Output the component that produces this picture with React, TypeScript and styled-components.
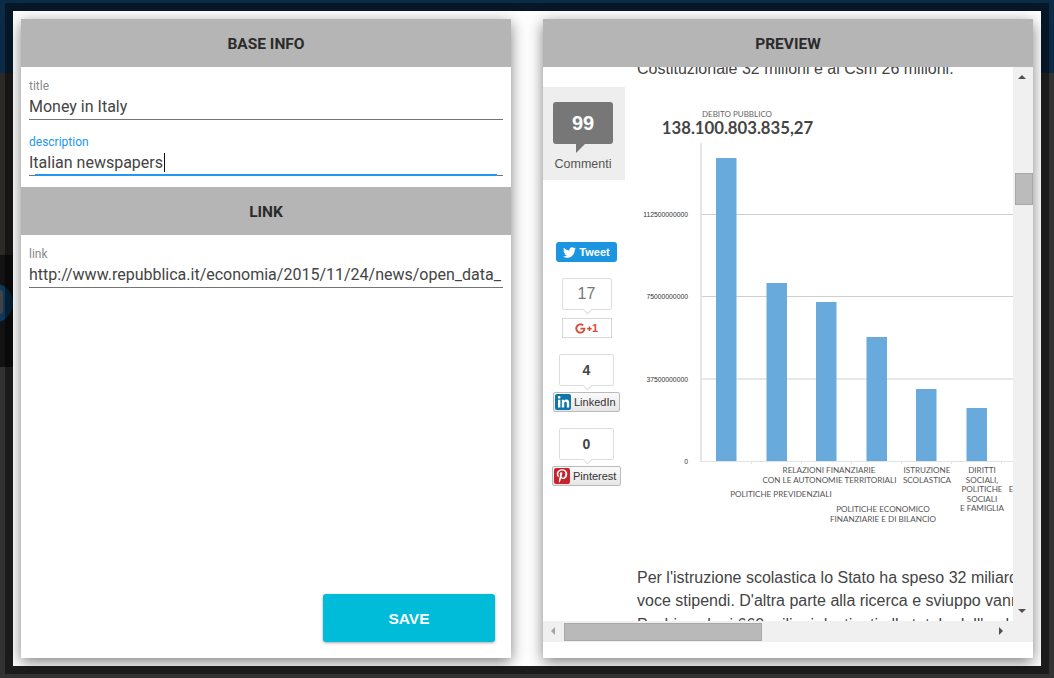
import React from 'react';
import styled, { createGlobalStyle } from 'styled-components';
import { FaTwitter, FaPinterestP, FaLinkedinIn, FaGooglePlusG } from 'react-icons/fa';

const GlobalStyle = createGlobalStyle`
  html, body {
    margin: 0;
    padding: 0;
    height: 100%;
    overflow: hidden;
    background: #333;
    font-family: Roboto, "Liberation Sans", sans-serif;
  }
`;

const App: React.FC = () => (
  <Page>
    <GlobalStyle />
    <Navbar />
    <MapBand />
    <DarkBand>
      <BlueBadge />
    </DarkBand>
    <FooterBand />

    <Frame>
      <Modal>
        <Panel>
          <PanelHeader>BASE INFO</PanelHeader>
          <FieldGroup>
            <Field>
              <FieldLabel>title</FieldLabel>
              <FieldValue>Money in Italy</FieldValue>
            </Field>
            <Field>
              <FieldLabel $focused>description</FieldLabel>
              <FieldValue $focused>
                Italian newspapers
                <Caret />
              </FieldValue>
            </Field>
          </FieldGroup>
          <PanelHeader>LINK</PanelHeader>
          <FieldGroup>
            <Field>
              <FieldLabel>link</FieldLabel>
              <FieldValue>http://www.repubblica.it/economia/2015/11/24/news/open_data_</FieldValue>
            </Field>
          </FieldGroup>
          <SaveButton>SAVE</SaveButton>
        </Panel>

        <Panel>
          <PanelHeader>PREVIEW</PanelHeader>
          <PreviewGrid>
            <Viewport>
              <ShareBar>
                <CommentBox>
                  <CommentBubble>99</CommentBubble>
                  <CommentLabel>Commenti</CommentLabel>
                </CommentBox>
                <SocialStack>
                  <TweetButton>
                    <FaTwitter size={13} />
                    Tweet
                  </TweetButton>
                  <ShareGroup>
                    <CountBox $width={50} $light>17</CountBox>
                    <PlusButton>
                      <FaGooglePlusG size={17} />
                      <PlusOne>1</PlusOne>
                    </PlusButton>
                  </ShareGroup>
                  <ShareGroup>
                    <CountBox $width={55}>4</CountBox>
                    <BrandButton $width={67}>
                      <BrandIcon $color="#0e76a8">
                        <FaLinkedinIn size={13} />
                      </BrandIcon>
                      LinkedIn
                    </BrandButton>
                  </ShareGroup>
                  <ShareGroup>
                    <CountBox $width={55}>0</CountBox>
                    <BrandButton $width={69}>
                      <BrandIcon $color="#c8232c">
                        <FaPinterestP size={14} />
                      </BrandIcon>
                      Pinterest
                    </BrandButton>
                  </ShareGroup>
                </SocialStack>
              </ShareBar>
              <Article>
                <ArticleLine>Costituzionale 32 milioni e al Csm 26 milioni.</ArticleLine>
                <DebtChart />
                <ArticleText>
                  <ArticleLine>Per l'istruzione scolastica lo Stato ha speso 32 miliardi di euro, soprattutto alla</ArticleLine>
                  <ArticleLine>voce stipendi. D'altra parte alla ricerca e sviuppo vanno solo pochi spiccioli.</ArticleLine>
                  <ArticleLine>Pochi anche i 660 milioni destinati alla tutela dell'ambiente e del territorio.</ArticleLine>
                </ArticleText>
              </Article>
            </Viewport>
            <VerticalTrack>
              <ArrowUp />
              <VerticalThumb />
              <ArrowDown />
            </VerticalTrack>
            <HorizontalTrack>
              <ArrowLeft />
              <HorizontalThumb />
              <ArrowRight />
            </HorizontalTrack>
          </PreviewGrid>
        </Panel>
      </Modal>
    </Frame>
  </Page>
);

const bars = [
  { x: 716, top: 158 },
  { x: 766.5, top: 283 },
  { x: 816, top: 302 },
  { x: 866.5, top: 337 },
  { x: 916, top: 389 },
  { x: 966.5, top: 408 },
];

const ticks = [751, 801, 851, 901, 951, 1001];

const xLabels = [
  { x: 829, y: 473, text: 'RELAZIONI FINANZIARIE' },
  { x: 829.5, y: 482.5, text: 'CON LE AUTONOMIE TERRITORIALI' },
  { x: 781, y: 497, text: 'POLITICHE PREVIDENZIALI' },
  { x: 883, y: 512, text: 'POLITICHE ECONOMICO' },
  { x: 883, y: 521.5, text: 'FINANZIARIE E DI BILANCIO' },
  { x: 927, y: 473, text: 'ISTRUZIONE' },
  { x: 927, y: 482.5, text: 'SCOLASTICA' },
  { x: 982, y: 473, text: 'DIRITTI' },
  { x: 982, y: 482.5, text: 'SOCIALI,' },
  { x: 982, y: 492, text: 'POLITICHE' },
  { x: 982, y: 501.5, text: 'SOCIALI' },
  { x: 982, y: 511, text: 'E FAMIGLIA' },
  { x: 1011, y: 492, text: 'E' },
];

const DebtChart: React.FC = () => (
  <ChartSvg viewBox="637 100 376 430" width={376} height={430}>
    <text x={737} y={117} textAnchor="middle" fontFamily="Lato" fontSize={8} fill="#666">
      DEBITO PUBBLICO
    </text>
    <text x={737.5} y={134} textAnchor="middle" fontFamily="Lato" fontWeight={700} fontSize={16.7} fill="#444">
      138.100.803.835,27
    </text>
    <rect x={700} y={143} width={2} height={319} fill="#e6e6e6" />
    {[214, 296, 378.5].map(y => (
      <rect key={y} x={702} y={y} width={311} height={1} fill="#cfcfcf" />
    ))}
    <rect x={700} y={461} width={313} height={1} fill="#e2e2e2" />
    {ticks.map(x => (
      <rect key={x} x={x} y={461} width={1} height={3} fill="#e6e6e6" />
    ))}
    {bars.map(b => (
      <rect key={b.x} x={b.x} y={b.top} width={20.5} height={461 - b.top} fill="#68aadc" />
    ))}
    <g fontFamily="Liberation Sans" fontSize={6.8} fill="#333" textAnchor="end">
      <text x={688} y={217}>112500000000</text>
      <text x={688} y={299}>75000000000</text>
      <text x={688} y={381.5}>37500000000</text>
      <text x={688} y={464}>0</text>
    </g>
    <g fontFamily="Lato" fontSize={8.1} fill="#555" textAnchor="middle">
      {xLabels.map(l => (
        <text key={l.text + l.y} x={l.x} y={l.y}>
          {l.text}
        </text>
      ))}
    </g>
  </ChartSvg>
);

const Page = styled.div`
  position: relative;
  width: 1054px;
  height: 678px;
  overflow: hidden;
  display: flex;
  flex-direction: column;
`;

const Navbar = styled.div`
  height: 73px;
  background: #0b2b47;
`;

const MapBand = styled.div`
  height: 182px;
  background: linear-gradient(90deg, #2c2b28 0 60px, #333 60px);
`;

const DarkBand = styled.div`
  position: relative;
  height: 112px;
  overflow: hidden;
  background: linear-gradient(90deg, #131313 0 60px, #333 60px);
`;

const BlueBadge = styled.div`
  position: absolute;
  left: -27px;
  top: 28px;
  width: 40px;
  height: 40px;
  border-radius: 50%;
  background: #0b3a5e;

  &::after {
    content: '';
    position: absolute;
    left: -4px;
    top: 7px;
    width: 34px;
    height: 24px;
    border-radius: 3px;
    background: #444;
  }
`;

const FooterBand = styled.div`
  flex: 1;
  background: #333;
`;

const Frame = styled.div`
  position: absolute;
  left: 5px;
  top: 3px;
  width: 1044px;
  height: 671px;
  box-sizing: border-box;
  padding: 8px;
  background: rgba(0, 0, 0, 0.45);
`;

const Modal = styled.div`
  display: flex;
  gap: 32px;
  height: 100%;
  box-sizing: border-box;
  padding: 8px;
  background: #fff;
`;

const Panel = styled.section`
  display: flex;
  flex-direction: column;
  width: 490px;
  height: 639px;
  flex: none;
  background: #fff;
  box-shadow: 0 4px 14px rgba(0, 0, 0, 0.5);
`;

const PanelHeader = styled.h2`
  flex: none;
  height: 48px;
  margin: 0;
  background: #b5b5b5;
  color: #2b2b2b;
  font-size: 15.5px;
  font-weight: 700;
  line-height: 50px;
  text-align: center;
`;

const FieldGroup = styled.div`
  display: flex;
  flex-direction: column;
  gap: 15px;
  padding: 12px 8px 11px;
`;

const Field = styled.div`
  display: flex;
  flex-direction: column;
`;

const FieldLabel = styled.label<{ $focused?: boolean }>`
  height: 14px;
  color: ${props => (props.$focused ? '#2196f3' : '#8a8a8a')};
  font-size: 12px;
  line-height: 14px;
`;

const FieldValue = styled.div<{ $focused?: boolean }>`
  position: relative;
  height: 26px;
  overflow: hidden;
  white-space: nowrap;
  border-bottom: 1px solid #757575;
  color: #444;
  font-size: 16px;
  line-height: 28px;

  ${props =>
    props.$focused &&
    `
    overflow: visible;
    &::after {
      content: '';
      position: absolute;
      left: 6px;
      right: 6px;
      bottom: -1px;
      height: 2px;
      background: #2196f3;
    }
  `}
`;

const Caret = styled.span`
  display: inline-block;
  width: 1px;
  height: 19px;
  margin-left: 1px;
  vertical-align: -4px;
  background: #111;
`;

const SaveButton = styled.button`
  align-self: flex-end;
  width: 172px;
  height: 48px;
  margin: auto 16px 16px 0;
  padding: 2px 0 0;
  border: none;
  border-radius: 3px;
  background: #00bcd9;
  color: #fff;
  font-family: "Liberation Sans", Arial, sans-serif;
  font-size: 15.5px;
  font-weight: 700;
  box-shadow: 0 1px 3px rgba(0, 0, 0, 0.35);
`;

const PreviewGrid = styled.div`
  display: grid;
  grid-template-columns: 470px 20px;
  grid-template-rows: 554px 21px;
`;

const Viewport = styled.div`
  display: flex;
  overflow: hidden;
  font-family: "Liberation Sans", Arial, sans-serif;
`;

const ShareBar = styled.aside`
  display: flex;
  flex-direction: column;
  flex: none;
  width: 82px;
  padding-top: 20px;
`;

const CommentBox = styled.div`
  display: flex;
  flex-direction: column;
  align-items: center;
  box-sizing: border-box;
  width: 82px;
  height: 93px;
  padding: 15px 2px 0 0;
  background: #eee;
`;

const CommentBubble = styled.div`
  position: relative;
  width: 60px;
  height: 42px;
  border-radius: 3px;
  background: #777;
  color: #fff;
  font-size: 20px;
  font-weight: 700;
  line-height: 42px;
  text-align: center;

  &::after {
    content: '';
    position: absolute;
    left: 23px;
    top: 42px;
    border-top: 9px solid #777;
    border-right: 9px solid transparent;
  }
`;

const CommentLabel = styled.div`
  margin-top: 13px;
  color: #555;
  font-size: 12.5px;
  line-height: 14px;
`;

const SocialStack = styled.div`
  display: flex;
  flex-direction: column;
  align-items: center;
  gap: 16px;
  padding: 62px 0 0 5px;
`;

const TweetButton = styled.div`
  display: flex;
  align-items: center;
  justify-content: center;
  gap: 3px;
  width: 61px;
  height: 20px;
  border-radius: 3px;
  background: #1b95e0;
  color: #fff;
  font-size: 11px;
  font-weight: 700;
`;

const ShareGroup = styled.div`
  display: flex;
  flex-direction: column;
  align-items: center;
`;

const CountBox = styled.div<{ $width: number; $light?: boolean }>`
  position: relative;
  box-sizing: border-box;
  width: ${props => props.$width}px;
  height: 32px;
  border: 1px solid #ddd;
  border-radius: 2px;
  color: ${props => (props.$light ? '#777' : '#444')};
  font-size: ${props => (props.$light ? 16 : 14)}px;
  font-weight: ${props => (props.$light ? 400 : 700)};
  line-height: 30px;
  text-align: center;

  &::after {
    content: '';
    position: absolute;
    left: 50%;
    bottom: -4px;
    width: 6px;
    height: 6px;
    margin-left: -3px;
    background: #fff;
    border-right: 1px solid #ddd;
    border-bottom: 1px solid #ddd;
    transform: rotate(45deg);
  }
`;

const PlusButton = styled.div`
  display: flex;
  align-items: center;
  justify-content: center;
  box-sizing: border-box;
  width: 50px;
  height: 20px;
  margin-top: 8px;
  border: 1px solid #d6d6d6;
  color: #dc4a38;
`;

const PlusOne = styled.span`
  font-size: 11px;
  font-weight: 700;
  line-height: 1;
`;

const BrandButton = styled.div<{ $width: number }>`
  display: flex;
  align-items: center;
  gap: 3px;
  box-sizing: border-box;
  width: ${props => props.$width}px;
  height: 20px;
  margin-top: 6px;
  padding-left: 1px;
  border: 1px solid #bbb;
  border-radius: 2px;
  background: linear-gradient(#fafafa, #e6e6e6);
  color: #333;
  font-size: 11px;
`;

const BrandIcon = styled.span<{ $color: string }>`
  display: flex;
  align-items: center;
  justify-content: center;
  width: 16px;
  height: 16px;
  border-radius: 2px;
  background: ${props => props.$color};
  color: #fff;
`;

const Article = styled.article`
  flex: none;
  width: 388px;
  margin-top: -10px;
  margin-left: 12px;
  color: #444;
  font-size: 16px;
  line-height: 23.5px;
  white-space: nowrap;
`;

const ArticleLine = styled.div`
  height: 23.5px;
`;

const ChartSvg = styled.svg`
  display: block;
  margin-top: 19px;
`;

const ArticleText = styled.div`
  margin-top: 36px;
`;

const VerticalTrack = styled.div`
  position: relative;
  background: #f0f0f0;
`;

const VerticalThumb = styled.div`
  position: absolute;
  left: 2px;
  top: 106px;
  width: 16px;
  height: 30px;
  border: 1px solid #a8a8a8;
  background: #bbb;
`;

const HorizontalTrack = styled.div`
  position: relative;
  grid-column: 1 / span 2;
  background: #f0f0f0;
`;

const HorizontalThumb = styled.div`
  position: absolute;
  left: 21px;
  top: 2px;
  width: 196px;
  height: 16px;
  border: 1px solid #a8a8a8;
  box-sizing: content-box;
  background: #b9b9b9;
`;

const ArrowUp = styled.span`
  position: absolute;
  left: 5px;
  top: 8px;
  border-left: 4px solid transparent;
  border-right: 4px solid transparent;
  border-bottom: 4px solid #505050;
`;

const ArrowDown = styled.span`
  position: absolute;
  left: 5px;
  bottom: 8px;
  border-left: 4px solid transparent;
  border-right: 4px solid transparent;
  border-top: 4px solid #505050;
`;

const ArrowLeft = styled.span`
  position: absolute;
  left: 8px;
  top: 6px;
  border-top: 4px solid transparent;
  border-bottom: 4px solid transparent;
  border-right: 4px solid #a3a3a3;
`;

const ArrowRight = styled.span`
  position: absolute;
  left: 456px;
  top: 6px;
  border-top: 4px solid transparent;
  border-bottom: 4px solid transparent;
  border-left: 4px solid #505050;
`;

export default App;
